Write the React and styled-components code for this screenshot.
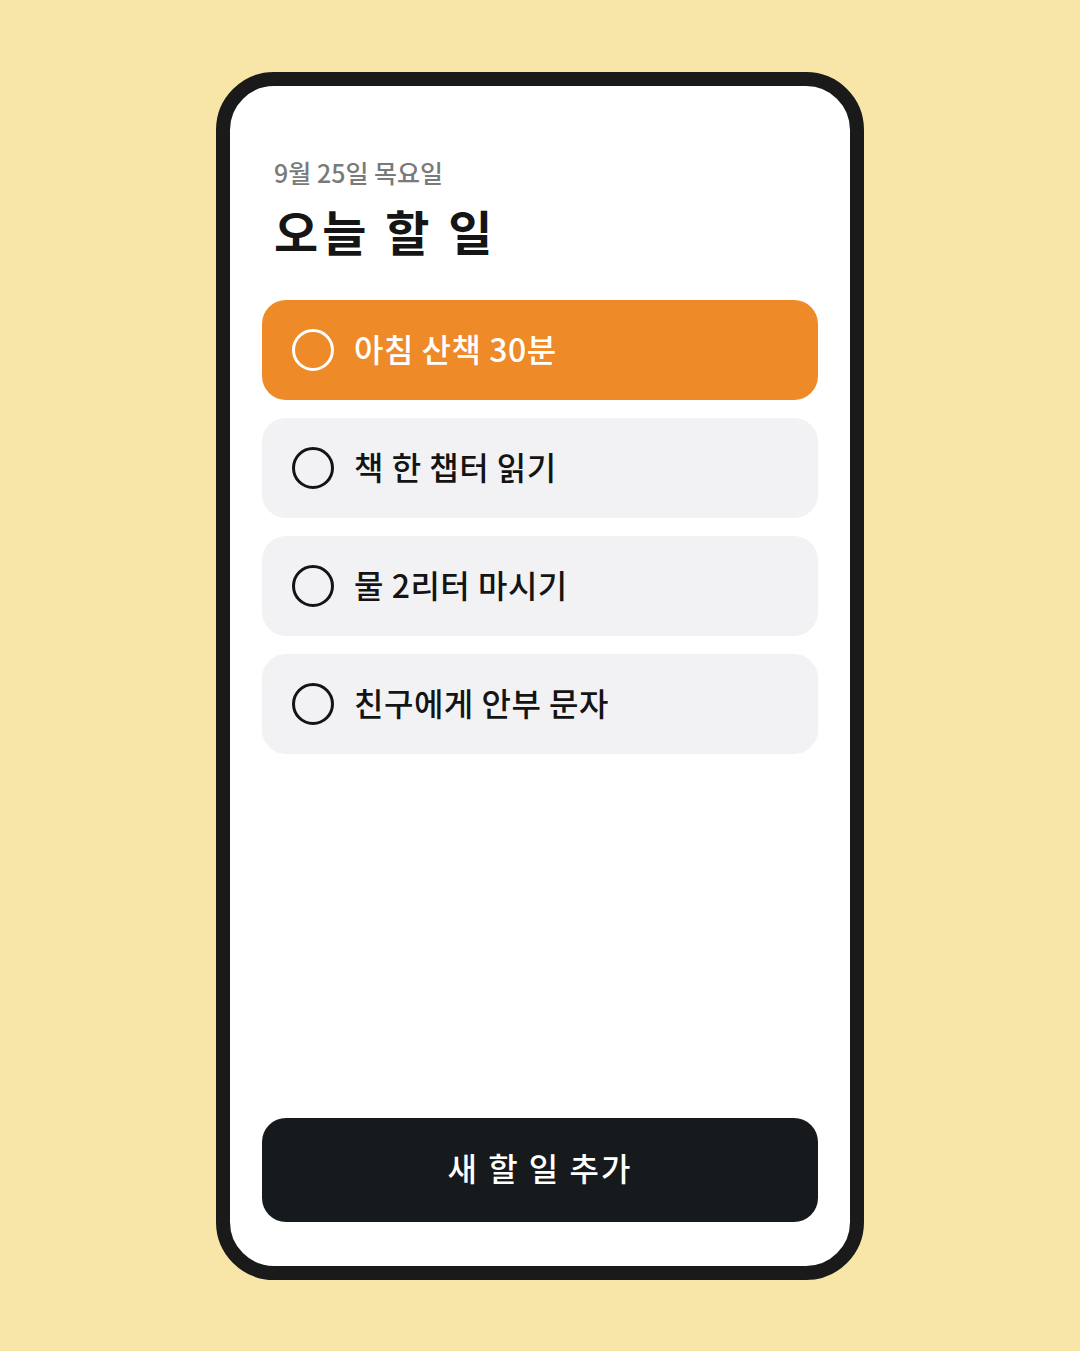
import React from "react";
import styled, { createGlobalStyle } from "styled-components";

const GlobalStyle = createGlobalStyle`
  html, body {
    margin: 0;
    padding: 0;
    background: #f8e6a9;
  }
  body {
    font-family: "Noto Sans CJK KR", "Noto Sans", sans-serif;
  }
`;

const Page = styled.div`
  width: 1080px;
  height: 1351px;
  display: flex;
  align-items: flex-start;
  justify-content: center;
  padding-top: 72px;
  box-sizing: border-box;
  background: #f8e6a9;
`;

const Phone = styled.div`
  width: 648px;
  height: 1208px;
  box-sizing: border-box;
  border: 14px solid #1a1a1a;
  border-radius: 58px;
  background: #ffffff;
  padding: 68px 32px 44px;
  display: flex;
  flex-direction: column;
`;

const DateLabel = styled.div`
  font-size: 25px;
  font-weight: 500;
  color: #7a7a7a;
  line-height: 36px;
  padding-left: 12px;
`;

const Title = styled.h1`
  margin: 8px 0 0;
  padding-left: 12px;
  font-size: 48px;
  font-weight: 700;
  letter-spacing: 4px;
  color: #151515;
  line-height: 64px;
`;

const List = styled.div`
  margin-top: 38px;
  display: flex;
  flex-direction: column;
  gap: 18px;
  flex: 1;
`;

const Item = styled.div`
  height: 100px;
  border-radius: 24px;
  background: ${(p) => (p.$active ? "#ee8a28" : "#f2f2f4")};
  color: ${(p) => (p.$active ? "#ffffff" : "#141414")};
  display: flex;
  align-items: center;
  padding-left: 30px;
  gap: 20px;
`;

const Check = styled.span`
  width: 42px;
  height: 42px;
  box-sizing: border-box;
  border-radius: 50%;
  border: 3.5px solid currentColor;
  flex-shrink: 0;
`;

const ItemText = styled.span`
  font-size: 32px;
  font-weight: 500;
  letter-spacing: 0.5px;
  line-height: 1;
  padding-bottom: 5px;
`;

const AddButton = styled.button`
  height: 104px;
  border: none;
  border-radius: 24px;
  background: #171a1c;
  color: #ffffff;
  font-family: inherit;
  font-size: 32px;
  font-weight: 500;
  letter-spacing: 2px;
  padding: 0 0 7px;
  cursor: pointer;
`;

const todos = [
  { text: "아침 산책 30분", active: true },
  { text: "책 한 챕터 읽기" },
  { text: "물 2리터 마시기" },
  { text: "친구에게 안부 문자" },
];

export default function App() {
  return (
    <>
      <GlobalStyle />
      <Page>
        <Phone>
          <DateLabel>9월 25일 목요일</DateLabel>
          <Title>오늘 할 일</Title>
          <List>
            {todos.map((t) => (
              <Item key={t.text} $active={t.active}>
                <Check />
                <ItemText>{t.text}</ItemText>
              </Item>
            ))}
          </List>
          <AddButton>새 할 일 추가</AddButton>
        </Phone>
      </Page>
    </>
  );
}
